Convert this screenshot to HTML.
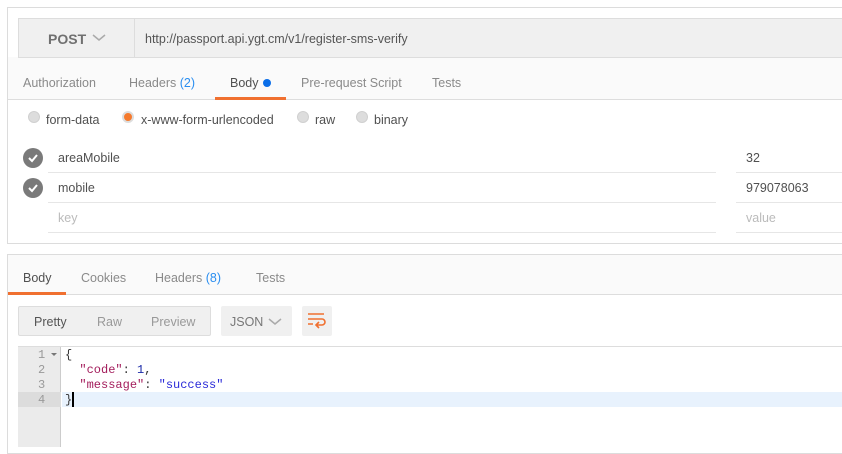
<!DOCTYPE html><html><head><style>
*{margin:0;padding:0;box-sizing:border-box}
body{width:842px;height:426px;background:#fff;font-family:"Liberation Sans",sans-serif;font-size:12px;color:#505050;position:relative;overflow:hidden}
.a{position:absolute}
.g{color:#8a8a8a}
.t{font-size:12.5px}
.blue{color:#2a8ef0}
.radio{position:absolute;width:12px;height:12px;border-radius:50%;background:#ddd;border:1px solid #d0d0d0}
.chk{position:absolute;width:20px;height:20px;border-radius:50%;background:#7a7a7a}
.line{position:absolute;height:1px;background:#e6e6e6}
.mono{font-family:"Liberation Mono",monospace;font-size:12px}
</style></head><body>
<div class="a" style="left:7px;top:7px;width:840px;height:237px;border:1px solid #dcdcdc;background:#fff"></div>
<div class="a" style="left:8px;top:57px;width:834px;height:43px;background:#fafafa;border-bottom:1px solid #ddd"></div>
<div class="a" style="left:18px;top:18px;width:830px;height:40px;background:#f0f0f0;border:1px solid #ddd"></div>
<div class="a" style="left:134px;top:19px;width:1px;height:38px;background:#ddd"></div>
<div class="a" style="left:48px;top:31px;font-size:14px;font-weight:bold;color:#707070">POST</div>
<svg class="a" style="left:92px;top:34px" width="14" height="8"><path d="M1 1L7 6L13 1" stroke="#aaa" stroke-width="1.5" fill="none"/></svg>
<div class="a t" style="left:145px;top:32px;color:#555">http://passport.api.ygt.cm/v1/register-sms-verify</div>
<div class="a g t" style="left:23px;top:76px">Authorization</div>
<div class="a g t" style="left:129px;top:76px">Headers <span class="blue">(2)</span></div>
<div class="a t" style="left:230px;top:76px;color:#505050">Body</div>
<div class="a" style="left:263px;top:79px;width:8px;height:8px;border-radius:50%;background:#0b6ee8"></div>
<div class="a" style="left:215px;top:97px;width:71px;height:3px;background:#f07030"></div>
<div class="a g t" style="left:301px;top:76px">Pre-request Script</div>
<div class="a g t" style="left:432px;top:76px">Tests</div>
<div class="radio" style="left:28px;top:111px"></div><div class="a t" style="left:46px;top:113px">form-data</div>
<div class="radio" style="left:122px;top:111px;background:#f57a2d;border:2px solid #ddd"></div><div class="a t" style="left:141px;top:113px">x-www-form-urlencoded</div>
<div class="radio" style="left:297px;top:111px"></div><div class="a t" style="left:315px;top:113px">raw</div>
<div class="radio" style="left:356px;top:111px"></div><div class="a t" style="left:374px;top:113px">binary</div>
<div class="chk" style="left:23px;top:148px"></div>
<svg class="a" style="left:27px;top:152px" width="12" height="12"><path d="M2 6L5 9L10 3" stroke="#fff" stroke-width="2" fill="none"/></svg>
<div class="chk" style="left:23px;top:178px"></div>
<svg class="a" style="left:27px;top:182px" width="12" height="12"><path d="M2 6L5 9L10 3" stroke="#fff" stroke-width="2" fill="none"/></svg>
<div class="a t" style="left:58px;top:151px">areaMobile</div>
<div class="a t" style="left:58px;top:181px">mobile</div>
<div class="a t" style="left:58px;top:211px;color:#bbb">key</div>
<div class="a t" style="left:746px;top:151px">32</div>
<div class="a t" style="left:746px;top:181px">979078063</div>
<div class="a t" style="left:746px;top:211px;color:#bbb">value</div>
<div class="line" style="left:48px;top:172px;width:668px"></div>
<div class="line" style="left:48px;top:202px;width:668px"></div>
<div class="line" style="left:48px;top:232px;width:668px"></div>
<div class="line" style="left:736px;top:172px;width:106px"></div>
<div class="line" style="left:736px;top:202px;width:106px"></div>
<div class="line" style="left:736px;top:232px;width:106px"></div>

<div class="a" style="left:7px;top:254px;width:840px;height:200px;border:1px solid #dcdcdc;background:#fff"></div>
<div class="a" style="left:8px;top:255px;width:834px;height:40px;background:#fafafa;border-bottom:1px solid #ddd"></div>
<div class="a t" style="left:23px;top:271px">Body</div>
<div class="a" style="left:8px;top:292px;width:58px;height:3px;background:#f07030"></div>
<div class="a g t" style="left:81px;top:271px">Cookies</div>
<div class="a g t" style="left:155px;top:271px">Headers <span class="blue">(8)</span></div>
<div class="a g t" style="left:256px;top:271px">Tests</div>
<div class="a" style="left:18px;top:306px;width:193px;height:30px;background:#f0f0f0;border:1px solid #ddd;border-radius:2px"></div>
<div class="a t" style="left:34px;top:315px;color:#555">Pretty</div>
<div class="a t" style="left:97px;top:315px;color:#999">Raw</div>
<div class="a t" style="left:151px;top:315px;color:#999">Preview</div>
<div class="a" style="left:221px;top:306px;width:71px;height:30px;background:#f0f0f0;border-radius:2px"></div>
<div class="a t" style="left:230px;top:315px;color:#777">JSON</div>
<svg class="a" style="left:268px;top:318px" width="14" height="8"><path d="M1 1L7 6L13 1" stroke="#aaa" stroke-width="1.5" fill="none"/></svg>
<div class="a" style="left:302px;top:306px;width:30px;height:30px;background:#f0f0f0;border-radius:2px"></div>
<svg class="a" style="left:307px;top:312px" width="20" height="18"><path d="M1 2H17M1 7H15a3 3 0 0 1 0 6H10M1 12H6M12 10L9 13L12 16" stroke="#f07030" stroke-width="1.6" fill="none"/></svg>
<div class="a" style="left:18px;top:346px;width:830px;height:100px;border-top:1px solid #ddd"></div>
<div class="a" style="left:18px;top:347px;width:43px;height:100px;background:#ebebeb;border-right:1px solid #ccc"></div>
<div class="a" style="left:18px;top:392px;width:43px;height:15px;background:#dcdcdc"></div>
<div class="a" style="left:62px;top:392px;width:780px;height:15px;background:#e8f2fd"></div>
<div class="a mono" style="left:38px;top:348px;color:#999;line-height:15px">1<br>2<br>3<br>4</div>
<div class="a" style="left:51px;top:353px;width:0;height:0;border-left:3px solid transparent;border-right:3px solid transparent;border-top:3px solid #777"></div>
<div class="a mono" style="left:65px;top:348px;line-height:15px;color:#333;white-space:pre">{
  <span style="color:#a31c5b">"code"</span>: <span style="color:#1a2aa8">1</span>,
  <span style="color:#a31c5b">"message"</span>: <span style="color:#2a2ad8">"success"</span>
}</div>
<div class="a" style="left:72px;top:392px;width:2px;height:15px;background:#000"></div>
</body></html>
